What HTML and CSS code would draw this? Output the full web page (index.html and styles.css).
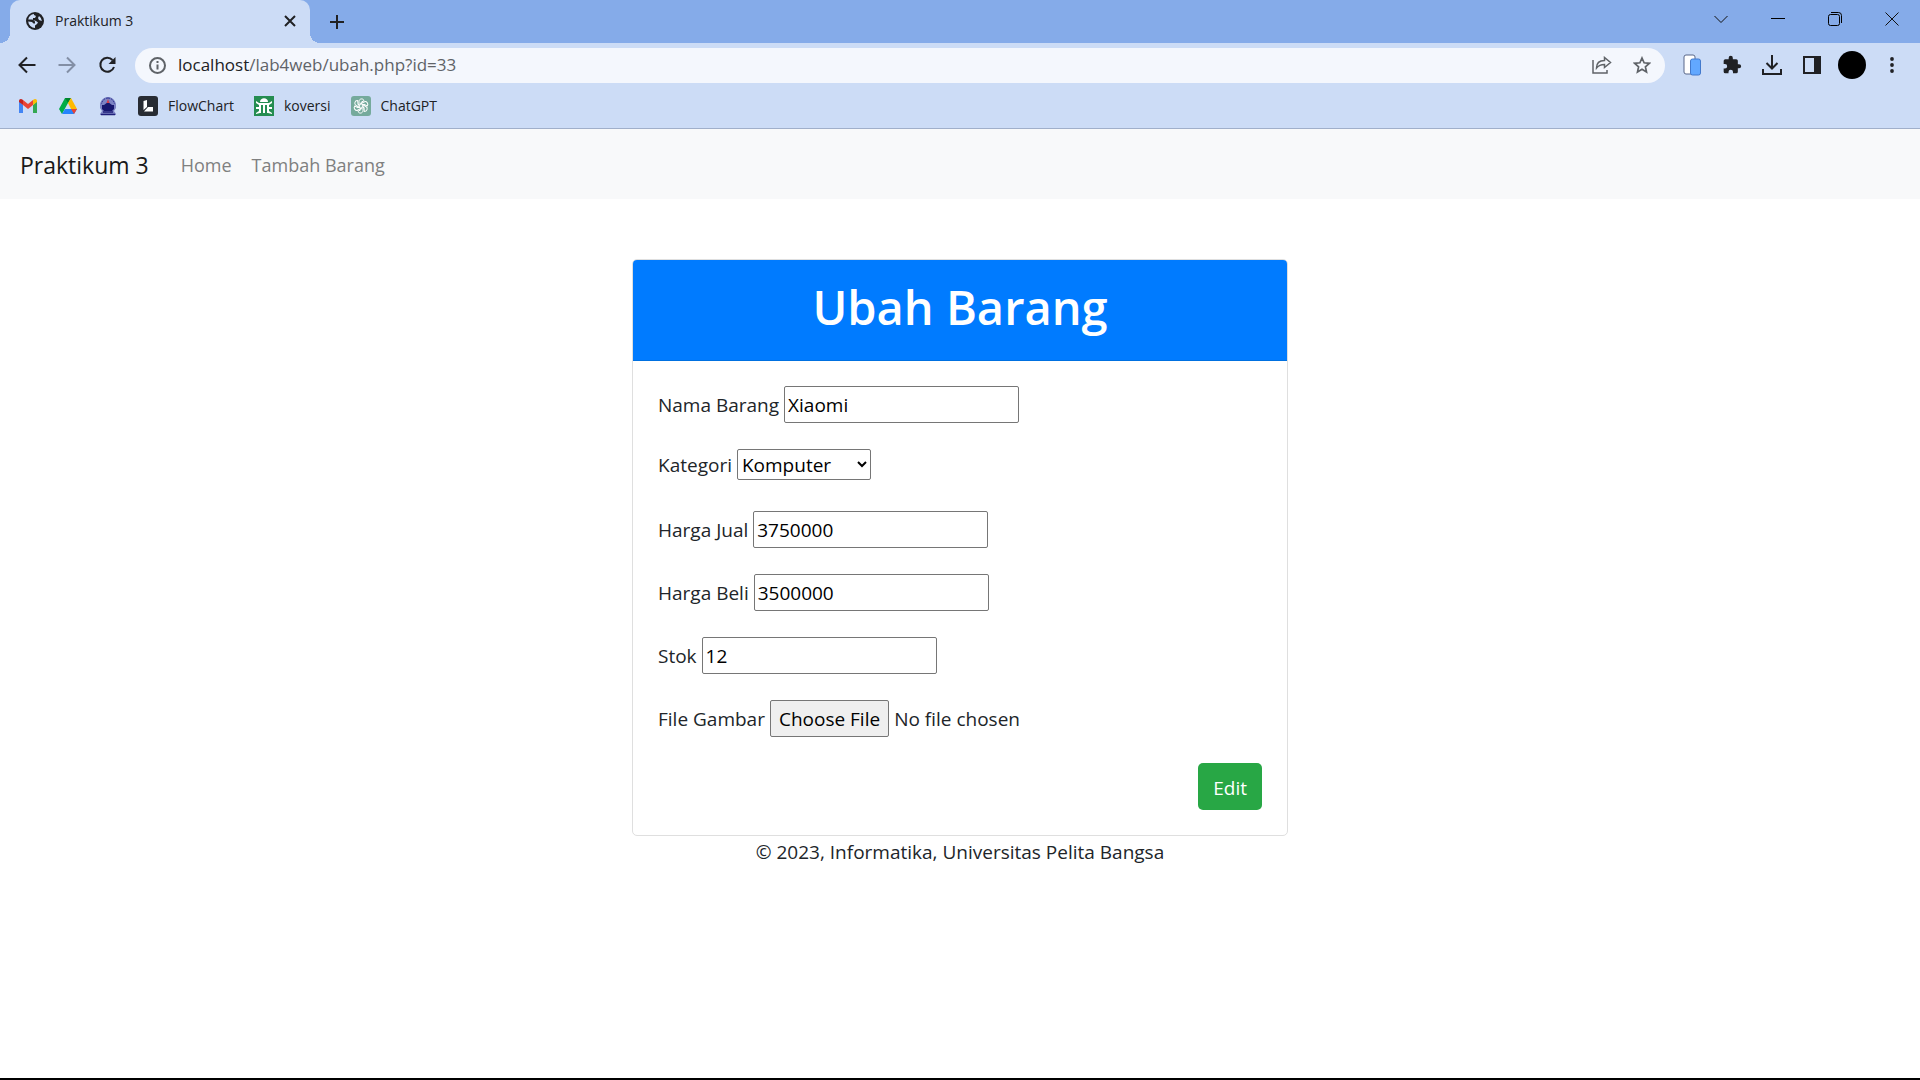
FILE: index.html
```html
<!DOCTYPE html>
<html lang="id">
<head>
<meta charset="utf-8">
<title>Praktikum 3</title>
<link rel="stylesheet" href="styles.css">
</head>
<body>
<div class="browser">
  <div class="tabstrip">
    <div class="tab">
      <svg class="tab-icon" width="18" height="18" viewBox="0 0 18 18"><circle cx="9" cy="9" r="9" fill="#202124"/><path d="M8 2a7 7 0 0 0-5.800 5.500h4.300l2.500 2v2H7.500L6 10 2.200 9.500A7 7 0 0 0 9 16v-2.500l2-1.500 1-1.500-2-1.500-3-1V6h2l1-2-2-1z" fill="#ccdcf6"/><path d="M13 4l-1 2 1 2 2.900 1A7 7 0 0 0 13 4z" fill="#ccdcf6"/></svg>
      <span class="tab-title">Praktikum 3</span>
      <button class="icon-button" aria-label="Close tab"><svg width="12" height="12" viewBox="0 0 12 12"><path d="M1 1l10 10M11 1L1 11" stroke="#202124" stroke-width="2"/></svg></button>
    </div>
    <button class="icon-button new-tab" aria-label="New tab"><svg width="16" height="16" viewBox="0 0 16 16"><path d="M8 1v14M1 8h14" stroke="#202124" stroke-width="2"/></svg></button>
    <div class="window-controls">
      <button class="icon-button" aria-label="Search tabs"><svg width="14" height="14" viewBox="0 0 14 14"><path d="M.5 4L7 10.500 13.500 4" fill="none" stroke="#111"/></svg></button>
      <button class="icon-button" aria-label="Minimize"><svg width="14" height="14" viewBox="0 0 14 14"><path d="M0 6.500h14" stroke="#000"/></svg></button>
      <button class="icon-button" aria-label="Restore"><svg width="14" height="14" viewBox="0 0 14 14" fill="none" stroke="#000"><rect x=".5" y="2.500" width="11" height="11" rx="2"/><path d="M3 .5h7.500a3 3 0 0 1 3 3V11"/></svg></button>
      <button class="icon-button" aria-label="Close"><svg width="14" height="14" viewBox="0 0 14 14"><path d="M.5.5l13 13M13.500.5l-13 13" stroke="#111"/></svg></button>
    </div>
  </div>
  <div class="toolbar">
    <div class="nav-buttons">
      <button class="icon-button" aria-label="Back"><svg width="18" height="18" viewBox="0 0 18 18" fill="none" stroke="#202124" stroke-width="2"><path d="M17.500 9H2M9 1.500L1.500 9 9 16.500"/></svg></button>
      <button class="icon-button" aria-label="Forward"><svg width="18" height="18" viewBox="0 0 18 18" fill="none" stroke="#838fa5" stroke-width="2"><path d="M.5 9H16M9 1.500L16.500 9 9 16.500"/></svg></button>
      <button class="icon-button" aria-label="Reload"><svg width="18" height="18" viewBox="0 0 18 18"><path d="M14.500 4A7 7 0 1 0 16 11" fill="none" stroke="#202124" stroke-width="2"/><path d="M17.500 1v7h-7z" fill="#202124"/></svg></button>
    </div>
    <div class="address">
      <svg width="17" height="17" viewBox="0 0 17 17" fill="none" stroke="#5f6368" stroke-width="2"><circle cx="8.500" cy="8.500" r="7.500"/><path d="M8.500 7.500v5M8.500 4v2"/></svg>
      <div class="url"><span class="host">localhost</span>/lab4web/ubah.php?id=33</div>
      <button class="icon-button" aria-label="Share"><svg width="20" height="18" viewBox="0 0 20 18" fill="none" stroke="#5f6368" stroke-width="1.500"><path d="M1 4v13h14v-3M4.500 12c0-5 3-7.500 8-7.500V1.500L18.500 6.500l-6 5V8.500c-4 0-6 1-8 3.500z"/></svg></button>
      <button class="icon-button" aria-label="Bookmark"><svg width="18" height="18" viewBox="0 0 18 18" fill="none" stroke="#5f6368" stroke-width="1.700"><path d="M9 2l2.100 4.800 5.200.5-3.900 3.500 1.100 5.100L9 13.200l-4.500 2.700 1.100-5.100L1.700 7.300l5.200-.5z"/></svg></button>
    </div>
    <div class="extensions">
      <button class="icon-button" aria-label="Devices"><svg width="18" height="22" viewBox="0 0 18 22"><rect x="1" y="1" width="11" height="19" rx="2" fill="#fff" stroke="#596789"/><rect x="7.500" y="5" width="10" height="16" rx="2" fill="#62a8ff" stroke="#4279cc"/></svg></button>
      <button class="icon-button" aria-label="Extensions"><svg width="20" height="20" viewBox="0 0 24 24"><path d="M20.500 11H19V7a2 2 0 0 0-2-2h-4V3.500a2.500 2.500 0 0 0-5 0V5H4a2 2 0 0 0-2 2v3.800h1.500a2.700 2.700 0 0 1 0 5.400H2V20a2 2 0 0 0 2 2h3.800v-1.500a2.700 2.700 0 0 1 5.400 0V22H17a2 2 0 0 0 2-2v-4h1.500a2.500 2.500 0 0 0 0-5z" fill="#202124"/></svg></button>
      <button class="icon-button" aria-label="Downloads"><svg width="20" height="20" viewBox="0 0 20 20" fill="none" stroke="#202124" stroke-width="2"><path d="M10 0v13M4.500 8l5.500 5.500L15.500 8M1 14v5h18v-5"/></svg></button>
      <button class="icon-button" aria-label="Side panel"><svg width="18" height="18" viewBox="0 0 18 18"><path d="M0 0h18v18H0zM2 2v14h9V2z" fill="#202124" fill-rule="evenodd"/></svg></button>
      <button class="icon-button" aria-label="Profile"><span class="avatar"></span></button>
      <button class="icon-button" aria-label="Menu"><svg width="4" height="18" viewBox="0 0 4 18" fill="#202124"><circle cx="2" cy="3" r="1.900"/><circle cx="2" cy="9" r="1.900"/><circle cx="2" cy="15" r="1.900"/></svg></button>
    </div>
  </div>
  <div class="bookmarks">
    <a href="#" aria-label="Gmail"><svg width="20" height="20" viewBox="0 0 20 20"><path d="M1 5v12h4V9z" fill="#4285f4"/><path d="M19 5v12h-4V9z" fill="#34a853"/><path d="M5 4l5 4 5-4v5l-5 4-5-4z" fill="#ea4335"/><path d="M1 5c0-2 2-3 4-1v5L1 6z" fill="#c5221f"/><path d="M19 5c0-2-2-3-4-1v5l4-3z" fill="#fbbc04"/></svg></a>
    <a href="#" aria-label="Drive"><svg width="20" height="20" viewBox="0 0 20 20"><path d="M7 2h6l-3 5-6 11-3-5z" fill="#00ac47"/><path d="M7 2h6l-3 5z" fill="#00832d"/><path d="M13 2l6 11h-6L10 7z" fill="#ffba00"/><path d="M7 13h12l-3 5H4z" fill="#2684fc"/><path d="M13 13h6l-3 5z" fill="#ea4335"/></svg></a>
    <a href="#" aria-label="Kampus"><svg width="20" height="20" viewBox="0 0 20 20"><path d="M10 1c4 0 7 3 8 7v4l-2 3 2 3v1H2v-1l2-3-2-3V8c1-4 4-7 8-7z" fill="#7c83c4"/><path d="M10 2c4 0 6 3 6.500 6M10 2C6 2 4 5 3.500 8" fill="none" stroke="#303590" stroke-dasharray="2 1"/><path d="M4 9h2l4-3 4 3h2v4l-2 2H6l-2-2z" fill="#17176f"/><path d="M10 3l1.500 4h-3z" fill="#d43c4b"/><path d="M3 18.500h14M5 16h10" stroke="#20207a" stroke-width="1.500"/></svg></a>
    <a href="#"><svg width="20" height="20" viewBox="0 0 20 20"><rect width="20" height="20" rx="3" fill="#282c33"/><path d="M5.500 5L9 4v7l-3.500 3z" fill="#fff"/><path d="M6 15.500l4-4.500h5v4.500z" fill="#fff"/></svg>FlowChart</a>
    <a href="#"><svg width="20" height="20" viewBox="0 0 20 20"><path d="M0 0h20v20H0z" fill="#258d51"/><path d="M6 6c0-5 8-5 8 0z" fill="#fff"/><path d="M2 5l3 2h10l3-2v2l-3 2v2h3v2h-3v2l3 2v1l-4-1H6l-4 1v-1l3-2v-2H2v-2h3V9L2 7z" fill="#fff"/><path d="M7 9h2v8H7zM11 9h2v8h-2z" fill="#258d51"/></svg>koversi</a>
    <a href="#"><svg width="20" height="20" viewBox="0 0 20 20"><rect width="20" height="20" rx="3" fill="#75aa9c"/><g fill="none" stroke="#fff"><path id="petal" d="M8 10V5.500C8 2.500 12 2 13 4.500L10 6.500V9"/><use href="#petal" transform="rotate(60 10 10)"/><use href="#petal" transform="rotate(120 10 10)"/><use href="#petal" transform="rotate(180 10 10)"/><use href="#petal" transform="rotate(240 10 10)"/><use href="#petal" transform="rotate(300 10 10)"/></g></svg>ChatGPT</a>
  </div>
</div>
<nav class="navbar">
  <a class="brand" href="#">Praktikum 3</a>
  <a href="#">Home</a>
  <a href="#">Tambah Barang</a>
</nav>
<main>
  <section class="card">
    <h1>Ubah Barang</h1>
    <form>
      <div class="field"><label for="nama">Nama Barang</label><input id="nama" type="text" value="Xiaomi"></div>
      <div class="field select-field"><label for="kategori">Kategori</label><select id="kategori"><option>Komputer</option><option>Elektronik</option><option>Hand Phone</option></select></div>
      <div class="field"><label for="jual">Harga Jual</label><input id="jual" type="text" value="3750000"></div>
      <div class="field"><label for="beli">Harga Beli</label><input id="beli" type="text" value="3500000"></div>
      <div class="field"><label for="stok">Stok</label><input id="stok" type="text" value="12"></div>
      <div class="field"><label for="gambar">File Gambar</label><input id="gambar" type="file"></div>
      <button class="submit" type="button">Edit</button>
    </form>
  </section>
  <footer>© 2023, Informatika, Universitas Pelita Bangsa</footer>
</main>
</body>
</html>
```

FILE: styles.css
```css
* { box-sizing: border-box; }
body {
  margin: 0;
  min-height: 100vh;
  border-bottom: 2px solid #000;
  background: #fff;
  color: #212529;
  font: 19px/30px "Open Sans", "Noto Sans", sans-serif;
}
a { color: inherit; text-decoration: none; }
svg { display: block; flex: none; }
.icon-button {
  display: flex;
  align-items: center;
  justify-content: center;
  padding: 0;
  border: 0;
  background: none;
}

/* Browser window */
.browser {
  border-bottom: 1px solid #a0afca;
  background: #ccdcf6;
  color: #202124;
  font-size: 14px;
  line-height: 20px;
}
.tabstrip {
  display: flex;
  align-items: center;
  height: 43px;
  padding-left: 10px;
  background: #85abe9;
}
.tab {
  position: relative;
  display: flex;
  align-items: center;
  gap: 11px;
  width: 300px;
  height: 43px;
  padding: 0 14px 2px 16px;
  border-radius: 10px 10px 0 0;
  background: #ccdcf6;
}
.tab::before,
.tab::after {
  content: "";
  position: absolute;
  bottom: 0;
  width: 10px;
  height: 10px;
}
.tab::before {
  left: -10px;
  background: radial-gradient(circle at 0 0, transparent 10px, #ccdcf6 10px);
}
.tab::after {
  right: -10px;
  background: radial-gradient(circle at 100% 0, transparent 10px, #ccdcf6 10px);
}
.tab-title { flex: 1; }
.new-tab { margin-left: 19px; }
.window-controls { display: flex; margin: 0 0 6px auto; }
.window-controls .icon-button { width: 57px; height: 30px; }
.toolbar {
  display: flex;
  align-items: center;
  height: 44px;
  padding: 0 8px 0 18px;
}
.nav-buttons { display: flex; gap: 22px; margin-right: 19px; }
.address {
  display: flex;
  flex: 1;
  align-items: center;
  gap: 21px;
  height: 35px;
  padding: 0 14px;
  border-radius: 18px;
  background: #f4f7fd;
}
.url { flex: 1; margin-left: -9px; color: #5f6368; font-size: 17px; }
.host { color: #202124; }
.extensions { display: flex; align-items: center; margin-left: 7px; }
.extensions .icon-button { width: 40px; height: 40px; }
.avatar { width: 28px; height: 28px; border-radius: 50%; background: #000; }
.bookmarks {
  display: flex;
  align-items: center;
  gap: 20px;
  height: 41px;
  padding: 0 18px 3px;
}
.bookmarks a { display: flex; align-items: center; gap: 10px; }

/* Page */
.navbar {
  display: flex;
  align-items: center;
  gap: 20px;
  height: 70px;
  padding: 2px 20px 0;
  background: #f8f9fa;
  color: #7f8080;
  font-size: 18px;
}
.brand { margin-right: 12px; color: #191919; font-size: 23px; }
main { max-width: 656px; margin: 60px auto 0; }
.card {
  overflow: hidden;
  border: 1px solid #dfdfdf;
  border-radius: 5px;
}
h1 {
  margin: 0;
  padding: 17px 25px 23px;
  border-bottom: 1px solid #0070e0;
  background: #007bff;
  color: #fff;
  font-size: 47px;
  font-weight: 600;
  line-height: 60px;
  text-align: center;
}
form {
  display: flex;
  flex-direction: column;
  gap: 26px;
  padding: 25px;
}
.field { display: flex; align-items: center; gap: 5px; }
input, select, button { color: #000; font: inherit; }
input[type="text"] {
  width: 235px;
  height: 37px;
  padding: 1px 3px;
  border: 1px solid #767676;
  border-radius: 2px;
}
.select-field { padding-bottom: 5px; }
select {
  width: 134px;
  height: 31px;
  border: 1px solid #767676;
  border-radius: 2px;
  background: #fff;
}
input[type="file"] { height: 37px; color: #212529; }
input[type="file"]::file-selector-button {
  height: 37px;
  padding: 1px 8px;
  margin-right: 5px;
  border: 1px solid #767676;
  border-radius: 2px;
  background: #efefef;
  color: #000;
  font: inherit;
}
.submit {
  align-self: flex-end;
  height: 47px;
  padding: 2px 15px 0;
  border: 0;
  border-radius: 5px;
  background: #28a745;
  color: #fff;
}
footer { padding-top: 1px; text-align: center; }
```
